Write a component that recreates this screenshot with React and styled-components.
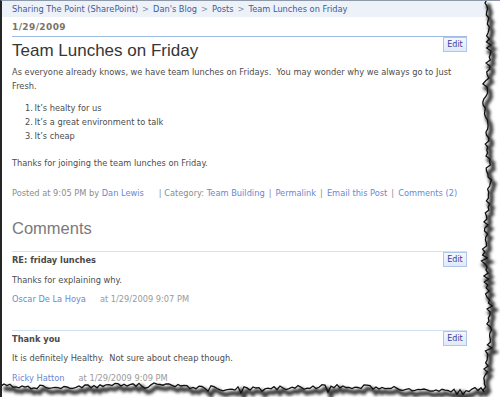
import React from 'react';
import styled, { createGlobalStyle } from 'styled-components';

const GlobalStyle = createGlobalStyle`
  html, body {
    margin: 0;
    padding: 0;
    background: #fff;
  }
  body {
    font-family: 'DejaVu Sans', Verdana, sans-serif;
  }
`;

// seeded jitter so the torn edge is the same on every run
const makeRand = seed => () => {
  seed = (seed * 16807) % 2147483647;
  return seed / 2147483647;
};

const buildEdge = () => {
  const rand = makeRand(11);
  const pts = [];
  for (let y = 0; y <= 390; y += 3) {
    const spike = rand() > 0.85 ? (rand() - 0.5) * 8 : 0;
    const x = 487 + 2 * Math.sin(y / 23) + (rand() - 0.5) * 5 + spike;
    pts.push([x, y]);
  }
  pts.push([484, 392]);
  for (let x = 481; x >= 0; x -= 3) {
    const spike = rand() > 0.85 ? rand() * 5 : 0;
    const y = 385 + 4 * (x / 484) + 1.5 * Math.sin(x / 31) + (rand() - 0.5) * 4 + spike;
    pts.push([x, y]);
  }
  return pts;
};

const edge = buildEdge();
const line = (pts, dx = 0, dy = 0) =>
  pts.map(([x, y], i) => `${i ? 'L' : 'M'}${(x + dx).toFixed(1)} ${(y + dy).toFixed(1)}`).join(' ');
const outside = `${line(edge)} L0 397 L500 397 L500 0 Z`;

const crumbs = ['Sharing The Point (SharePoint)', "Dan's Blog", 'Posts', 'Team Lunches on Friday'];

const comments = [
  {
    title: 'RE: friday lunches',
    body: 'Thanks for explaining why.',
    author: 'Oscar De La Hoya',
    at: 'at 1/29/2009 9:07 PM',
    bodyGap: 6,
    bylineGap: 5,
  },
  {
    title: 'Thank you',
    body: 'It is definitely Healthy.\u00a0 Not sure about cheap though.',
    author: 'Ricky Hatton',
    at: 'at 1/29/2009 9:09 PM',
    bodyGap: 5,
    bylineGap: 6,
  },
];

const App = () => (
  <>
    <GlobalStyle />
    <Page>
      <Breadcrumb>
        {crumbs.map((c, i) => (
          <React.Fragment key={c}>
            {i > 0 && <Sep>&gt;</Sep>}
            <span>{c}</span>
          </React.Fragment>
        ))}
      </Breadcrumb>
      <Content>
        <PostDate>1/29/2009</PostDate>
        <HeadRow>
          <PostTitle>Team Lunches on Friday</PostTitle>
          <EditButton>Edit</EditButton>
        </HeadRow>
        <Para>
          As everyone already knows, we have team lunches on Fridays.&nbsp; You may wonder why we
          always go to Just Fresh.
        </Para>
        <List>
          <li>It’s healty for us</li>
          <li>It’s a great environment to talk</li>
          <li>It’s cheap</li>
        </List>
        <Para gap={13}>Thanks for joinging the team lunches on Friday.</Para>
        <Meta>
          Posted at 9:05 PM by <Link>Dan Lewis</Link>
          <Pipe first>|</Pipe> Category: <Link>Team Building</Link>
          <Pipe>|</Pipe>
          <Link>Permalink</Link>
          <Pipe>|</Pipe>
          <Link>Email this Post</Link>
          <Pipe>|</Pipe>
          <Link>Comments (2)</Link>
        </Meta>
        <CommentsHeading>Comments</CommentsHeading>
        {comments.map(c => (
          <Comment key={c.title}>
            <CommentMain>
              <CommentTitle>{c.title}</CommentTitle>
              <CommentBody gap={c.bodyGap}>{c.body}</CommentBody>
              <Byline gap={c.bylineGap}>
                <Link>{c.author}</Link>
                <When>{c.at}</When>
              </Byline>
            </CommentMain>
            <EditButton>Edit</EditButton>
          </Comment>
        ))}
      </Content>
      <TornEdge viewBox="0 0 500 397" width="500" height="397">
        <defs>
          <filter id="soft" x="-10%" y="-10%" width="120%" height="120%">
            <feGaussianBlur stdDeviation="1.4" />
          </filter>
        </defs>
        <path d={outside} fill="#fff" />
        <path
          d={line(edge, 3, 4)}
          fill="none"
          stroke="#3c3c3c"
          strokeWidth="4.5"
          filter="url(#soft)"
        />
        <path d={line(edge)} fill="none" stroke="#111" strokeWidth="1.3" />
      </TornEdge>
    </Page>
  </>
);

const Page = styled.div`
  position: relative;
  width: 500px;
  height: 397px;
  box-sizing: border-box;
  overflow: hidden;
  background: #fff;
  border-left: 2px solid #262626;
  border-top: 1px solid #8d99a8;
  font-size: 8.25px;
  color: #4d4d4d;
`;

const Breadcrumb = styled.div`
  height: 16px;
  line-height: 16px;
  padding-left: 10px;
  background: #edf2f9;
  color: #3d5c9c;
  white-space: nowrap;
`;

const Sep = styled.span`
  color: #8090a8;
  margin: 0 4px;
`;

const Content = styled.div`
  padding: 0 33px 0 10px;
`;

const PostDate = styled.div`
  padding: 3px 0 2px;
  line-height: 14px;
  font-size: 9px;
  font-weight: bold;
  letter-spacing: 0.4px;
  color: #7b7369;
  border-bottom: 1px solid #9fbbe3;
`;

const HeadRow = styled.div`
  display: flex;
  justify-content: space-between;
  align-items: flex-start;
`;

const PostTitle = styled.h2`
  margin: 4px 0 0;
  font-family: 'Liberation Sans', Arial, sans-serif;
  font-size: 17px;
  line-height: 20px;
  font-weight: normal;
  color: #363636;
`;

const EditButton = styled.div`
  flex: none;
  width: 24px;
  height: 15px;
  box-sizing: border-box;
  border: 1px solid #aec6e8;
  background: linear-gradient(#f4f8fd, #dfeaf8);
  color: #36409c;
  font-size: 8px;
  line-height: 13px;
  text-align: center;
`;

const Para = styled.p`
  margin: ${p => p.gap || 4}px 0 0;
  line-height: 14px;
`;

const List = styled.ol`
  margin: 8px 0 0;
  padding-left: 13px;
  list-style: none;
  counter-reset: item;
  line-height: 14px;

  li {
    counter-increment: item;
  }

  li::before {
    content: counter(item) '.';
    display: inline-block;
    width: 9.5px;
  }
`;

const Meta = styled.div`
  margin-top: 16px;
  line-height: 14px;
  color: #8c8c8c;
  white-space: nowrap;
`;

const Link = styled.span`
  color: #6a88d2;
`;

const Pipe = styled.span`
  margin: ${p => (p.first ? '0 0 0 15px' : '0 4px')};
`;

const CommentsHeading = styled.h3`
  margin: 18px 0 13px;
  font-family: 'Liberation Sans', Arial, sans-serif;
  font-size: 16.5px;
  line-height: 20px;
  font-weight: normal;
  color: #7a7a7a;
`;

const Comment = styled.div`
  display: flex;
  justify-content: space-between;
  align-items: flex-start;
  border-top: 1px solid #d3e1f5;
  padding-bottom: 24px;
`;

const CommentMain = styled.div`
  padding-top: 1px;
`;

const CommentTitle = styled.div`
  line-height: 14px;
  font-weight: bold;
  color: #4a4a4a;
`;

const CommentBody = styled.div`
  margin-top: ${p => p.gap}px;
  line-height: 14px;
`;

const Byline = styled.div`
  margin-top: ${p => p.gap}px;
  line-height: 14px;
`;

const When = styled.span`
  margin-left: 14px;
  color: #9a9a9a;
`;

const TornEdge = styled.svg`
  position: absolute;
  left: -2px;
  top: -1px;
  pointer-events: none;
`;

export default App;
